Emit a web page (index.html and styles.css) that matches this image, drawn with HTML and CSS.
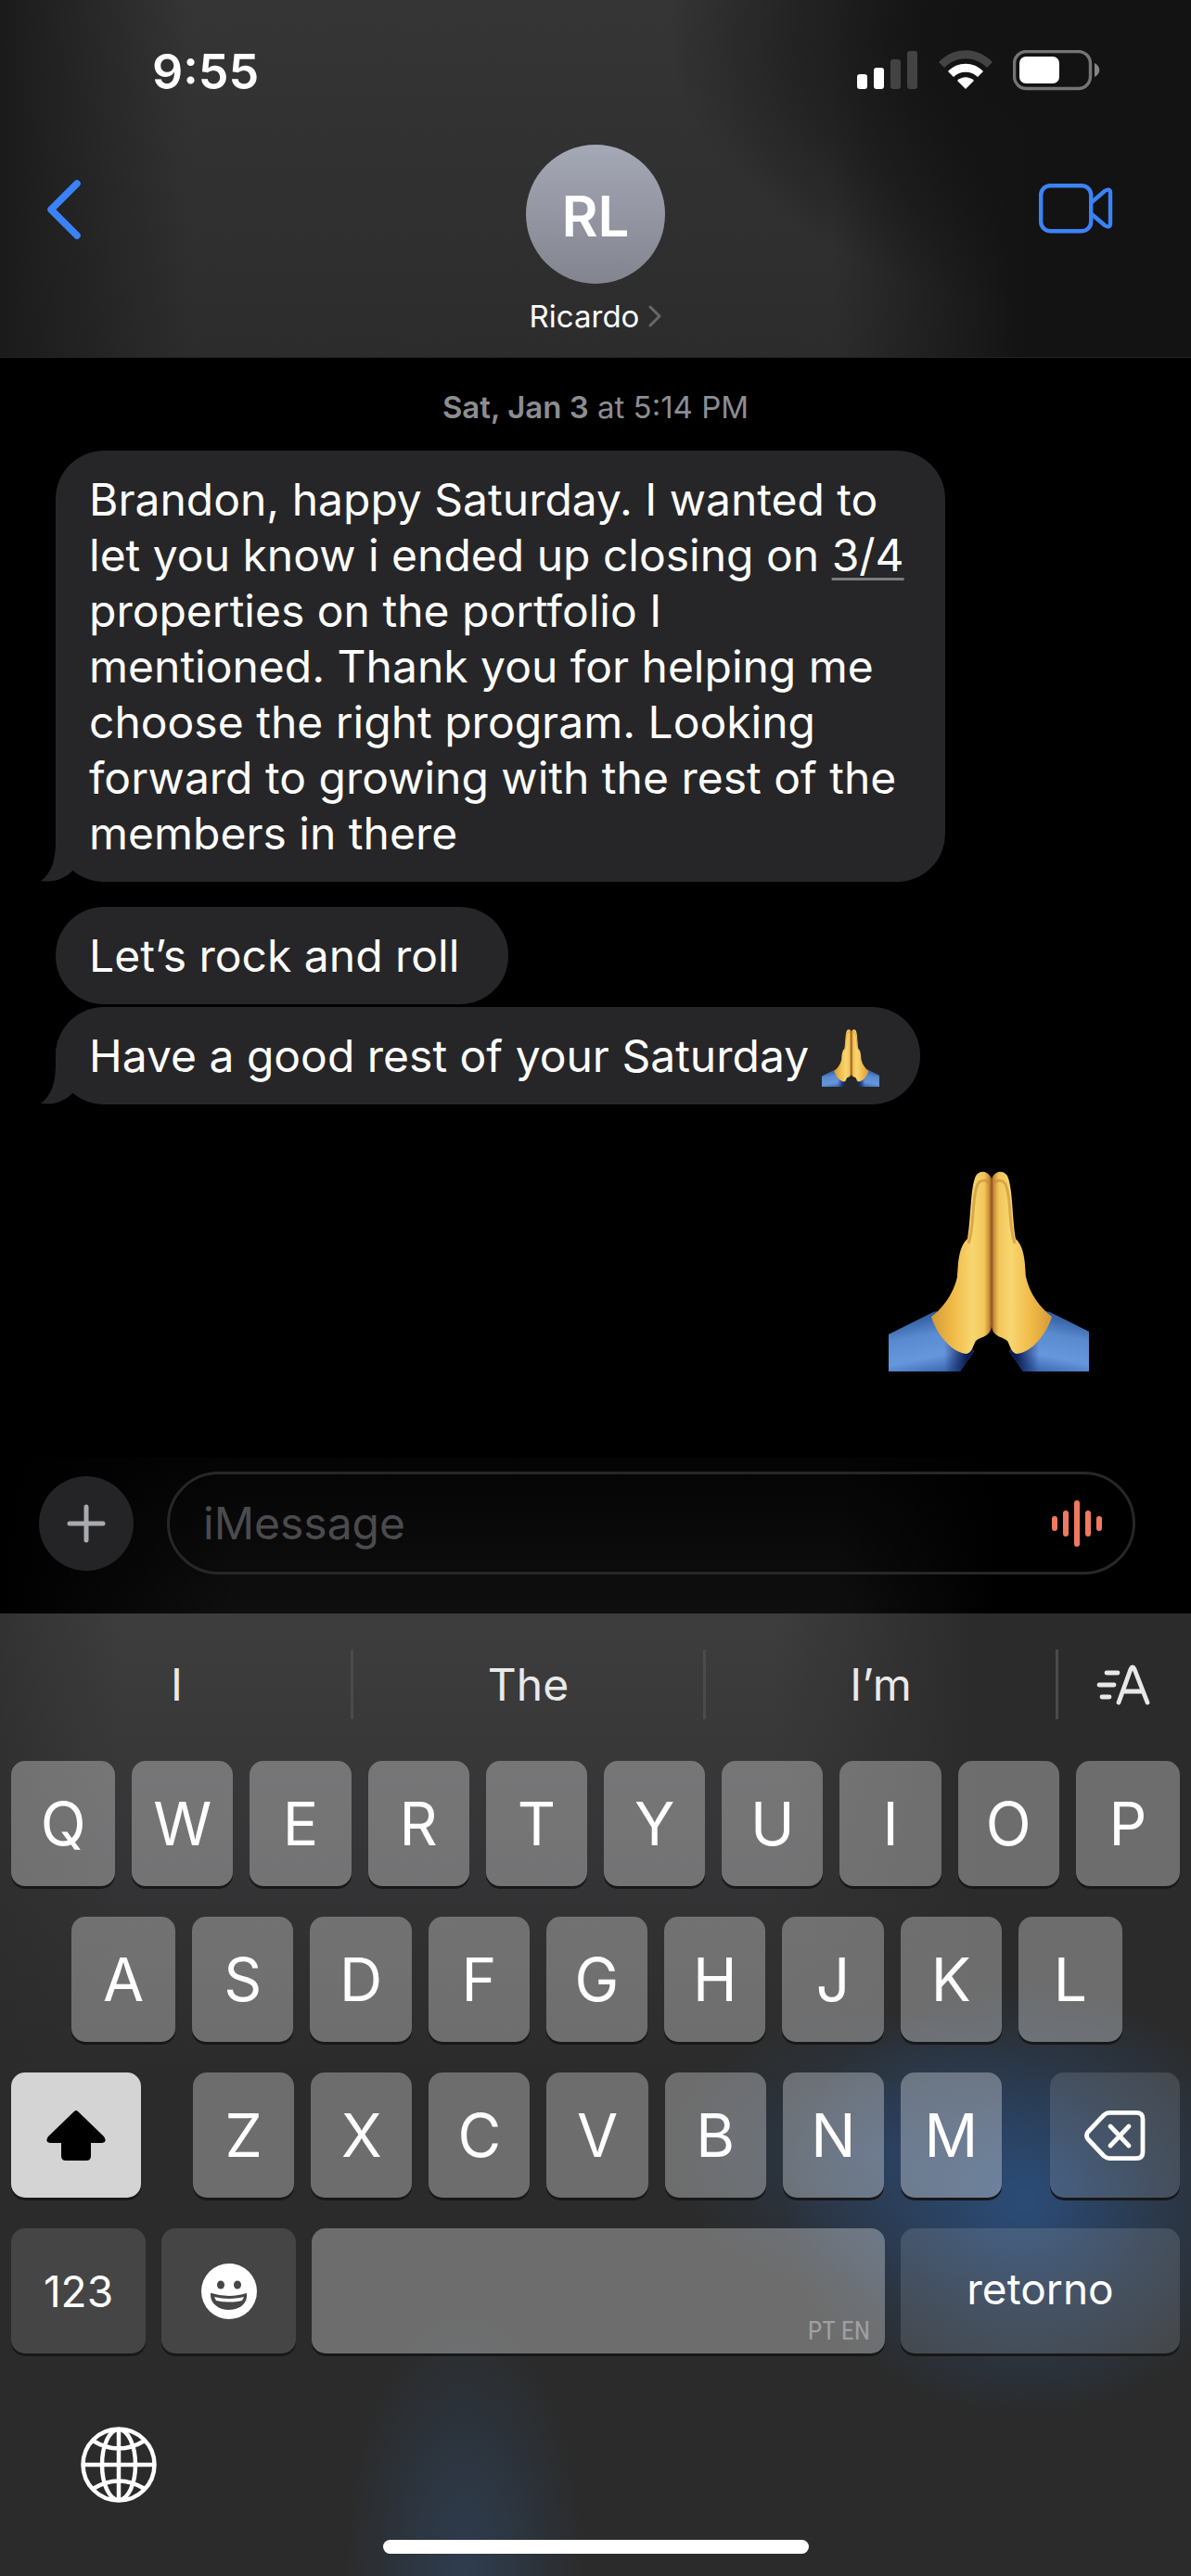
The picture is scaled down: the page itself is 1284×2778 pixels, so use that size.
FILE: index.html
```html
<!DOCTYPE html>
<html lang="en">
<head>
<meta charset="utf-8">
<meta name="viewport" content="width=device-width">
<title>Ricardo</title>
<link rel="stylesheet" href="styles.css">
</head>
<body>
<svg class="defs" aria-hidden="true">
  <defs>
    <linearGradient id="skin" x1="0" x2="1" y1="0" y2="0">
      <stop offset="0" stop-color="#d59a35"/>
      <stop offset="0.35" stop-color="#f0ba48"/>
      <stop offset="0.68" stop-color="#f8d670"/>
      <stop offset="0.88" stop-color="#f2c65a"/>
      <stop offset="0.96" stop-color="#cb8d38"/>
      <stop offset="1" stop-color="#8a5520"/>
    </linearGradient>
    <linearGradient id="sleeve" x1="0.3" y1="0" x2="0.6" y2="1">
      <stop offset="0" stop-color="#264f92"/>
      <stop offset="0.4" stop-color="#5a8bd0"/>
      <stop offset="0.75" stop-color="#6696dc"/>
      <stop offset="1" stop-color="#3f6cb4"/>
    </linearGradient>
    <linearGradient id="cuff" x1="0" x2="1" y1="0" y2="0">
      <stop offset="0.65" stop-color="#0a1c55" stop-opacity="0"/>
      <stop offset="0.92" stop-color="#0a1c55"/>
    </linearGradient>
    <symbol id="pray" viewBox="0 0 216 216">
      <g id="pray-half">
        <path d="M0 176 48 152C50 151 53 151 55 152L92 194 77 216H0Z" fill="url(#sleeve)"/>
        <path d="M0 176 48 152C50 151 53 151 55 152L92 194 77 216H0Z" fill="url(#cuff)"/>
        <path d="M111 168C109 179 100 178 94 183 91 188 90 196 84 197 68 196 52 176 46 157 59 147 70 132 74 114 75 100 75 82 85 73 89 50 88 18 94 5 98-1 107-1 111 8Z" fill="url(#skin)"/>
        <path d="M86 78C93 60 89 30 96 14 99 9 105 9 109 13" fill="none" stroke="#c98b30" stroke-width="3" opacity="0.6"/>
      </g>
      <use href="#pray-half" transform="translate(222 0) scale(-1 1)"/>
    </symbol>
  </defs>
</svg>

<header class="header">
  <div class="status">
    <span class="clock">9:55</span>
    <div class="indicators">
      <svg width="66" height="44" viewBox="0 0 66 44" role="img" aria-label="Signal"><g fill="#fff"><rect y="26" width="11" height="16" rx="3"/><rect x="18" y="19" width="11" height="23" rx="3"/></g><g fill="#434343"><rect x="36" y="10" width="11" height="32" rx="3"/><rect x="54" y="1" width="11" height="41" rx="3"/></g></svg>
      <svg width="58" height="44" viewBox="0 0 58 44" role="img" aria-label="Wi-Fi"><path d="M0 13C16-4 42-4 58 13L52 19C39 6 19 6 6 19Z" fill="#434343"/><path d="M10 23C20 12 38 12 48 23L42 29C35 22 23 22 16 29Z" fill="#fff"/><path d="M20 33C25 28 33 28 38 33L29 42Z" fill="#fff"/></svg>
      <svg width="95" height="44" viewBox="0 0 95 44" role="img" aria-label="Battery"><rect x="1.5" y="1.5" width="82" height="40" rx="13" fill="none" stroke="#757575" stroke-width="3.4"/><rect x="7" y="7" width="43" height="29" rx="7" fill="#fff"/><path d="M88 14C95 17 95 26 88 29Z" fill="#858585"/></svg>
    </div>
  </div>
  <nav class="nav">
    <button class="back" aria-label="Back"><svg width="37" height="64" viewBox="0 0 37 64"><path d="M33 4 5 32 33 60" fill="none" stroke="#3b82f7" stroke-width="7.500" stroke-linecap="round" stroke-linejoin="round"/></svg></button>
    <button class="contact">
      <span class="avatar">RL</span>
      <span class="name">Ricardo <svg width="14" height="24" viewBox="0 0 14 24" aria-hidden="true"><path d="M2 2 12 12 2 22" fill="none" stroke="#68686b" stroke-width="3" stroke-linecap="round" stroke-linejoin="round"/></svg></span>
    </button>
    <button class="video" aria-label="Video call"><svg width="80" height="54" viewBox="0 0 80 54"><g fill="none" stroke="#3b82f7" stroke-width="4.4" stroke-linejoin="round"><rect x="2.2" y="2.2" width="54" height="49" rx="10"/><path d="M57 20 71 8C74 6 77 6 77 10V43C77 47 74 47 71 45L57 33"/></g></svg></button>
  </nav>
</header>

<main class="thread">
  <p class="stamp"><b>Sat, Jan 3</b> at 5:14 PM</p>
  <div class="bubble group-end">Brandon, happy Saturday. I wanted to<br>let you know i ended up closing on <span class="date-link">3/4</span><br>properties on the portfolio I<br>mentioned. Thank you for helping me<br>choose the right program. Looking<br>forward to growing with the rest of the<br>members in there<svg class="tail" width="60" height="60" viewBox="0 0 60 60" aria-hidden="true"><path d="M16 0V16C16 36 12 50 0 59 14 61 26 57 35 47L60 20V0Z" fill="#262628"/></svg></div>
  <div class="bubble short">Let’s rock and roll</div>
  <div class="bubble">Have a good rest of your Saturday <svg class="emoji" role="img" aria-label="Folded hands"><use href="#pray"/></svg><svg class="tail" width="60" height="60" viewBox="0 0 60 60" aria-hidden="true"><path d="M16 0V16C16 36 12 50 0 59 14 61 26 57 35 47L60 20V0Z" fill="#262628"/></svg></div>
  <svg class="big-emoji" role="img" aria-label="Folded hands"><use href="#pray"/></svg>
</main>

<form class="composer">
  <button type="button" class="plus" aria-label="Add"><svg width="42" height="42" viewBox="0 0 42 42"><path d="M21 3V39M3 21H39" stroke="#a9aaad" stroke-width="5" stroke-linecap="round"/></svg></button>
  <div class="field">
    <input type="text" placeholder="iMessage" aria-label="iMessage">
    <button type="button" aria-label="Record audio"><svg width="56" height="50" viewBox="0 0 56 50"><path d="M4 20V30M16 14V36M28 3V47M40 14V36M52 20V30" stroke="#f1795f" stroke-width="6" stroke-linecap="round"/></svg></button>
  </div>
</form>

<section class="keyboard" aria-label="Keyboard">
  <div class="suggestions">
    <button>I</button><button>The</button><button>I’m</button>
    <button class="format" aria-label="Text format"><svg width="58" height="44" viewBox="0 0 58 44"><path d="M24 41 37 5Q39 1 41 5L55 41M29 29H50M11 9H23M3 22H19M6 35H14" fill="none" stroke="#e8e8e8" stroke-width="4.800" stroke-linecap="round" stroke-linejoin="round"/></svg></button>
  </div>
  <div class="row row-wide-ends"><button>Q</button><button>W</button><button>E</button><button>R</button><button>T</button><button>Y</button><button>U</button><button>I</button><button>O</button><button>P</button></div>
  <div class="row row-wide-ends row-home"><button>A</button><button>S</button><button>D</button><button>F</button><button>G</button><button>H</button><button>J</button><button>K</button><button>L</button></div>
  <div class="row row-shift">
    <button class="shift" aria-label="Shift"><svg width="64" height="56" viewBox="0 0 64 56"><path d="M30 2Q32 0 34 2L62 29Q66 35 60 36H48V50Q48 55 43 55H21Q16 55 16 50V36H4Q-2 35 2 29Z" fill="#000"/></svg></button>
    <div class="letters"><button>Z</button><button>X</button><button>C</button><button>V</button><button>B</button><button>N</button><button>M</button></div>
    <button class="dark" aria-label="Delete"><svg width="66" height="54" viewBox="0 0 66 54"><g fill="none" stroke="#fff" stroke-width="4.800" stroke-linecap="round" stroke-linejoin="round"><path d="M27 2.400H56Q63 2.400 63 9V45Q63 51.600 56 51.600H27Q24 51.600 21 49L4 31Q1 27 4 23L21 5Q24 2.400 27 2.400Z"/><path d="M28 17 48 38M48 17 28 38"/></g></svg></button>
  </div>
  <div class="row row-space">
    <button class="dark">123</button>
    <button class="dark" aria-label="Emoji"><svg width="60" height="60" viewBox="0 0 60 60"><circle cx="30" cy="30" r="30" fill="#fff"/><g fill="#464646"><ellipse cx="21" cy="23" rx="4" ry="4.500"/><ellipse cx="39" cy="23" rx="4" ry="4.500"/><path d="M11 32Q30 38 49 32C52 56 8 56 10 32Z"/></g><path d="M14 36Q30 40 46 36L44 40Q30 43 16 40Z" fill="#fff"/></svg></button>
    <button class="space" aria-label="Space"><span>PT EN</span></button>
    <button class="dark return">retorno</button>
  </div>
  <div class="dock">
    <button aria-label="Next keyboard"><svg width="82" height="82" viewBox="0 0 82 82"><g fill="none" stroke="#fff" stroke-width="4.500"><circle cx="41" cy="41" r="38.500"/><ellipse cx="41" cy="41" rx="18" ry="38"/><path d="M41 2V80M2 41H80M13 15Q41 32 69 15M13 67Q41 50 69 67"/></g></svg></button>
  </div>
  <div class="home"></div>
</section>
</body>
</html>
```
FILE: styles.css
```css
* {
  box-sizing: border-box;
}

body {
  margin: 0;
  min-height: 100vh;
  display: flex;
  flex-direction: column;
  background: #000;
  color: #fff;
  font-family: Inter, "Liberation Sans", sans-serif;
  font-size: 48px;
}

button {
  display: flex;
  align-items: center;
  justify-content: center;
  margin: 0;
  padding: 0;
  border: 0;
  background: none;
  color: inherit;
  font: inherit;
}

svg {
  display: block;
}

.defs {
  position: absolute;
  width: 0;
  height: 0;
}

/* Header */
.header {
  border-bottom: 1px solid #222;
  background:
    radial-gradient(ellipse 44% 85% at 100% 8%, #131313 45%, #13131388 75%, transparent),
    linear-gradient(90deg, #1b1b1b, transparent 16%, transparent 70%, #131313 86%),
    linear-gradient(#353535, #2c2c2d);
}

.status {
  display: flex;
  justify-content: space-between;
  padding: 48px 97px 0 164px;
}

.clock {
  font-size: 52px;
  font-weight: 600;
  line-height: 60px;
}

.indicators {
  display: flex;
  gap: 22px;
  padding-top: 6px;
}

.nav {
  display: grid;
  grid-template-columns: 1fr auto 1fr;
  padding: 48px 84px 26px 50px;
}

.back {
  justify-self: start;
  align-self: start;
  margin-top: 38px;
}

.video {
  justify-self: end;
  align-self: start;
  margin-top: 42px;
}

.contact {
  flex-direction: column;
  gap: 17px;
  margin-left: 34px;
}

.avatar {
  display: flex;
  align-items: center;
  justify-content: center;
  width: 150px;
  height: 150px;
  padding-top: 4px;
  border-radius: 50%;
  background: linear-gradient(#a5a8b5, #82858f);
  font-size: 60px;
  font-weight: 600;
}

.name {
  display: flex;
  align-items: center;
  gap: 10px;
  font-size: 33px;
  line-height: 36px;
}

/* Conversation */
.thread {
  flex: 1;
  display: flex;
  flex-direction: column;
  align-items: flex-start;
  padding: 35px 60px 0;
}

.stamp {
  align-self: center;
  margin: 0 0 29px;
  color: #8d8d93;
  font-size: 33px;
  line-height: 36px;
}

.stamp b {
  font-weight: 600;
}

.bubble {
  position: relative;
  isolation: isolate;
  margin-bottom: 3px;
  padding: 23px 44px 22px 36px;
  border-radius: 52px;
  background: #262628;
  line-height: 60px;
}

.short {
  padding-right: 53px;
}

.group-end {
  margin-bottom: 27px;
}

.date-link {
  text-decoration: underline #7c7c7e 3px;
  text-underline-offset: 7px;
}

.tail {
  position: absolute;
  z-index: -1;
  left: -16px;
  bottom: 0;
}

.emoji {
  display: inline-block;
  width: 62px;
  height: 62px;
  margin: -4px 0;
  vertical-align: -12px;
}

.big-emoji {
  align-self: flex-end;
  width: 216px;
  height: 216px;
  margin: 69px 50px 90px 0;
}

/* Message box */
.composer {
  display: flex;
  align-items: center;
  gap: 36px;
  padding: 15px 60px 42px 42px;
  background: linear-gradient(90deg, #000, transparent 20%, transparent 70%, #000 84%), linear-gradient(#040404, #0f0f0f);
}

.plus {
  width: 102px;
  height: 102px;
  border-radius: 50%;
  background: #242426;
}

.field {
  flex: 1;
  display: flex;
  align-items: center;
  height: 111px;
  padding: 0 32px 0 36px;
  border: 3px solid #272727;
  border-radius: 56px;
}

.field input {
  flex: 1;
  min-width: 0;
  padding: 0;
  border: 0;
  outline: 0;
  background: none;
  color: #fff;
  font: inherit;
}

.field input::placeholder {
  color: #4b4b4d;
  opacity: 1;
}

/* Keyboard */
.keyboard {
  display: flex;
  flex-direction: column;
  padding: 39px 12px 24px;
  background:
    radial-gradient(ellipse 260px 230px at 86% 61%, #2b4c78, #2b4c7877 50%, transparent),
    radial-gradient(ellipse 230px 150px at 74% 56%, #2b4c7877, transparent),
    radial-gradient(ellipse 130px 280px at 39% 100%, #2e3d50, #2e3d5077 55%, transparent),
    linear-gradient(90deg, #2b2b2b99, transparent 10%, transparent 65%, #2b2b2b 82%),
    linear-gradient(#3d3d3d, #353537 24%, #2b2b2b 48%);
}

.suggestions {
  display: grid;
  grid-template-columns: 366px 1fr 1fr 134px;
  height: 75px;
  margin-bottom: 45px;
  color: #e9e9e9;
}

.suggestions button:first-child {
  padding-right: 9px;
}

.suggestions button + button {
  border-left: 3px solid #4b4b4c;
}

.suggestions .format {
  padding-left: 8px;
}

.row {
  display: flex;
  gap: 18px;
  margin-bottom: 33px;
}

.row button {
  flex: 1;
  height: 135px;
  border-radius: 15px;
  background: #ffffff50;
  box-shadow: 0 3px 0 #181818;
  font-size: 64px;
}

.row-wide-ends button:first-child,
.row-wide-ends button:last-child {
  flex-basis: 3px;
}

.row-home {
  padding: 0 62px 0 65px;
}

.row-shift {
  justify-content: space-between;
}

.letters {
  display: flex;
  gap: 18px;
  flex: 0 0 876px;
  padding-left: 4px;
}

.row .dark {
  background: #ffffff20;
  font-size: 46px;
}

.row-shift > button {
  flex: 0 0 140px;
}

.row .shift {
  background: #d4d4d4;
}

.row-space {
  display: grid;
  grid-template-columns: 145px 145px 1fr 301px;
  gap: 17px;
  margin-bottom: 79px;
}

.row .space {
  align-items: flex-end;
  justify-content: flex-end;
  padding: 0 16px 8px;
  color: #a0a0a0;
  font-family: "Roboto Condensed", "Open Sans Condensed", Roboto, sans-serif;
  font-size: 28px;
}

.row .return {
  padding-bottom: 6px;
}

.dock {
  display: flex;
  padding-left: 75px;
  margin-bottom: 40px;
}

.home {
  align-self: center;
  width: 459px;
  height: 15px;
  border-radius: 8px;
  background: #fff;
}
```
